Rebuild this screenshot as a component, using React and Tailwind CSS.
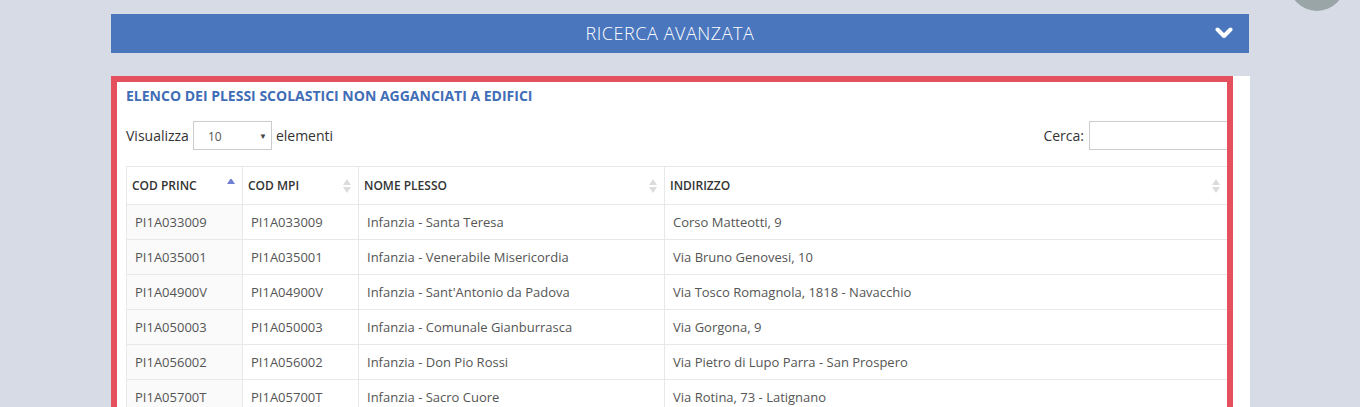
import React from 'react';

const rows = [
  ['PI1A033009', 'PI1A033009', 'Infanzia - Santa Teresa', 'Corso Matteotti, 9'],
  ['PI1A035001', 'PI1A035001', 'Infanzia - Venerabile Misericordia', 'Via Bruno Genovesi, 10'],
  ['PI1A04900V', 'PI1A04900V', "Infanzia - Sant'Antonio da Padova", 'Via Tosco Romagnola, 1818 - Navacchio'],
  ['PI1A050003', 'PI1A050003', 'Infanzia - Comunale Gianburrasca', 'Via Gorgona, 9'],
  ['PI1A056002', 'PI1A056002', 'Infanzia - Don Pio Rossi', 'Via Pietro di Lupo Parra - San Prospero'],
  ['PI1A05700T', 'PI1A05700T', 'Infanzia - Sacro Cuore', 'Via Rotina, 73 - Latignano'],
];

const columns = [
  { label: 'COD PRINC', width: 'w-[116px]', sort: 'asc' },
  { label: 'COD MPI', width: 'w-[116px]', sort: 'both' },
  { label: 'NOME PLESSO', width: 'w-[306px]', sort: 'both' },
  { label: 'INDIRIZZO', width: '', sort: 'both' },
];

const SortIcon = ({ mode }) => (
  <svg width="8" height="14" viewBox="0 0 8 14" className="absolute right-[7px] top-1/2 -translate-y-1/2">
    {mode === 'asc' ? (
      <path d="M4 4 L8 10 L0 10 Z" fill="#6f7fd3" transform="translate(0,-5)" />
    ) : (
      <>
        <path d="M4 0 L8 6 L0 6 Z" fill="#dcdcdc" />
        <path d="M0 8 L8 8 L4 14 Z" fill="#dcdcdc" />
      </>
    )}
  </svg>
);

const App = () => {
  return (
    <div className="w-[1360px] h-[407px] overflow-hidden bg-[#d6dbe5] relative" style={{ fontFamily: '"Open Sans", "Noto Sans", sans-serif' }}>
      {/* avatar peeking in the corner */}
      <div className="absolute left-[1289px] top-[-45px] w-[56px] h-[56px] rounded-full bg-[#99a5a7]" />

      <div className="pt-[14px] pl-[111px]">
        {/* collapsible advanced search bar */}
        <div className="w-[1138px] h-[39px] bg-[#4a76be] flex items-center justify-center pr-[20px] relative">
          <span className="text-white text-[18px] font-light tracking-[0.55px]">RICERCA AVANZATA</span>
          <svg width="18" height="12" viewBox="0 0 18 12" className="absolute left-[1104px] top-[13px]">
            <polyline points="2.5,2.5 9,9 15.5,2.5" fill="none" stroke="#fff" strokeWidth="4" strokeLinecap="round" strokeLinejoin="round" />
          </svg>
        </div>

        <div className="mt-[23px] w-[1139px] h-[360px] bg-white relative">
          <div className="pl-[15px] pt-[11px] w-[1117px]">
            <h2 className="text-[14px] leading-[18px] font-bold text-[#3f6db6]">
              ELENCO DEI PLESSI SCOLASTICI NON AGGANCIATI A EDIFICI
            </h2>

            <div className="mt-[16px] flex items-center justify-between text-[14px] text-[#333]">
              <div className="flex items-center gap-[4px]">
                <span>Visualizza</span>
                <div className="w-[79px] h-[29px] border border-[#cccccc] flex items-center justify-between pl-[14px] pr-[4px] text-[12px] text-[#555]">
                  <span className="pt-[2px]">10</span>
                  <span className="text-[8px] text-[#444]">▼</span>
                </div>
                <span>elementi</span>
              </div>
              <div className="flex items-center gap-[5px]">
                <span>Cerca:</span>
                <div className="w-[139px] h-[29px] border border-[#cccccc]" />
              </div>
            </div>

            <table className="mt-[16px] w-[1102px] border-collapse table-fixed text-[13px]">
              <thead>
                <tr className="h-[38px]">
                  {columns.map((c) => (
                    <th
                      key={c.label}
                      className={`${c.width} relative border border-[#e8e8e8] text-left pl-[5px] font-semibold text-[12px] text-[#333]`}
                    >
                      {c.label}
                      <SortIcon mode={c.sort} />
                    </th>
                  ))}
                </tr>
              </thead>
              <tbody>
                {rows.map((r) => (
                  <tr key={r[0]} className="h-[35px]">
                    {r.map((v, i) => (
                      <td
                        key={i}
                        className={`border border-[#e8e8e8] pl-[8px] pt-[1px] text-[#555] ${i === 0 ? 'bg-[#fafafa]' : ''}`}
                      >
                        {v}
                      </td>
                    ))}
                  </tr>
                ))}
              </tbody>
            </table>
          </div>

          {/* highlight frame around the list */}
          <div className="absolute left-0 top-0 w-[1122px] h-[400px] border-[6px] border-[#e4505d] pointer-events-none" />
        </div>
      </div>
    </div>
  );
};

export default App;
